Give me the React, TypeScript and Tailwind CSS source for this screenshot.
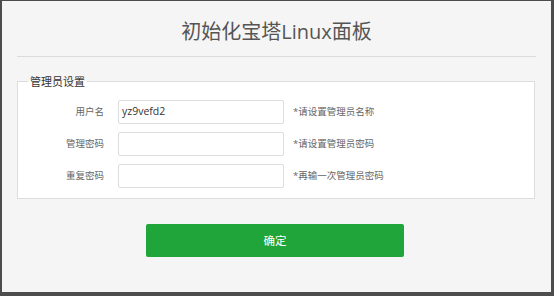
import React from "react";

const rows = [
  { label: "用户名", value: "yz9vefd2", hint: "*请设置管理员名称" },
  { label: "管理密码", value: "", hint: "*请设置管理员密码" },
  { label: "重复密码", value: "", hint: "*再输一次管理员密码" },
];

export default function App() {
  return (
    <div
      className="w-[554px] h-[296px] bg-[#4d4d4d] pt-px pl-[2px] pr-[3px] pb-[4px]"
      style={{ fontFamily: '"Open Sans", "Noto Sans CJK SC", sans-serif' }}
    >
      <div className="h-full bg-[#f5f5f5] px-[15px] flex flex-col">
        {/* header */}
        <h1 className="h-[55px] flex items-center justify-center pt-[6px] text-[20px] text-[#555] font-normal">
          初始化宝塔Linux面板
        </h1>
        <div className="h-px bg-[#dcdcdc]" />

        {/* admin settings */}
        <fieldset className="mt-[19px] mr-px border border-[#ddd] bg-white px-0 pt-[13px] pb-[10px]">
          <legend className="ml-[10px] px-[2px] text-[11px] text-[#333] leading-none">管理员设置</legend>
          <div className="flex flex-col gap-[8px]">
            {rows.map((r) => (
              <div key={r.label} className="flex items-center h-[24px]">
                <label className="w-[86px] text-right text-[9.5px] text-[#666]">{r.label}</label>
                <div className="ml-[14px] w-[166px] h-[24px] border border-[#ddd] rounded-[2px] bg-white flex items-center px-[3px] text-[10.5px] text-[#333]">
                  {r.value}
                </div>
                <span className="ml-[9px] text-[9.5px] text-[#666]">{r.hint}</span>
              </div>
            ))}
          </div>
        </fieldset>

        {/* submit */}
        <div className="flex justify-center mt-[25px] pr-[3px]">
          <button className="w-[258px] h-[33px] bg-[#20a53a] rounded-[2px] text-white text-[11.5px]">
            确定
          </button>
        </div>
      </div>
    </div>
  );
}
